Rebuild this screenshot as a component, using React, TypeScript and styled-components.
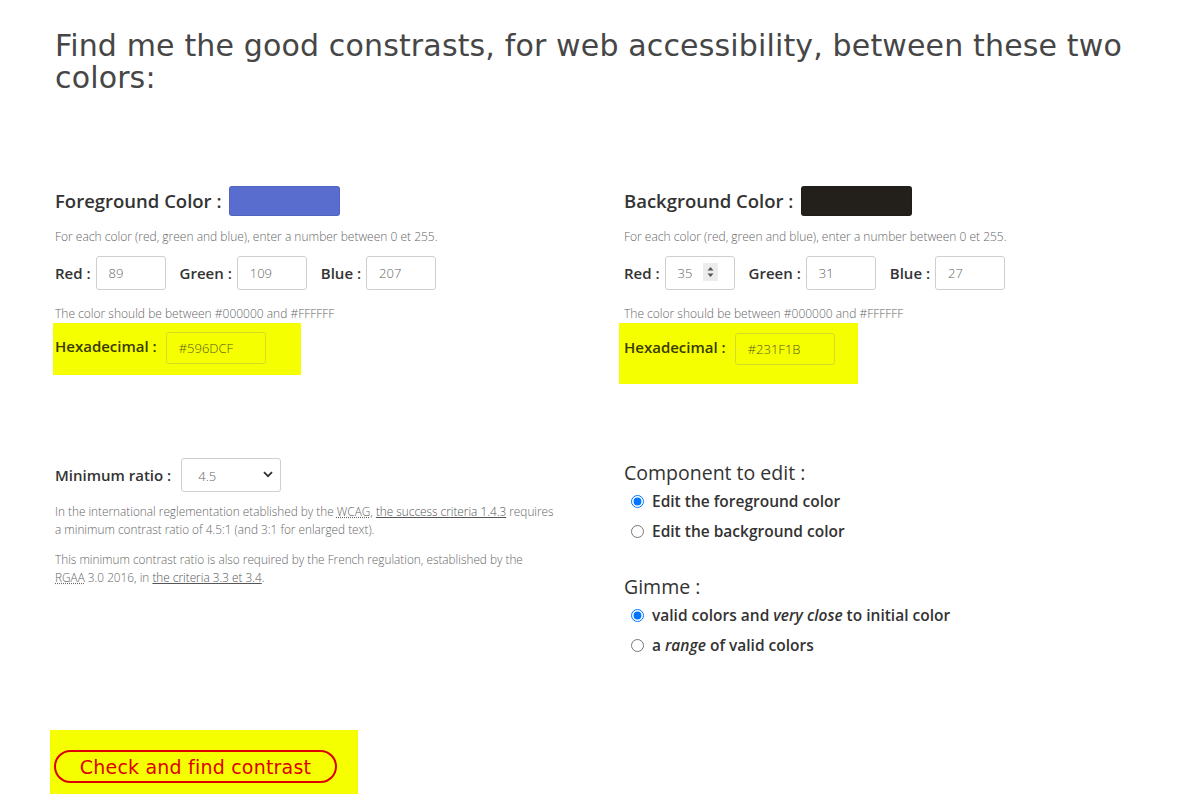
import React from 'react';
import styled, { createGlobalStyle } from 'styled-components';

const GlobalStyle = createGlobalStyle`
  html, body {
    margin: 0;
    padding: 0;
    background: #fff;
  }
  body {
    font-family: 'Open Sans', 'Liberation Sans', sans-serif;
    color: #333;
  }
`;

const Page = styled.main`
  padding: 30px 0 40px 55px;
  width: 1090px;
`;

const Title = styled.h1`
  margin: 0;
  font-family: 'DejaVu Sans', 'Liberation Sans', sans-serif;
  font-weight: 400;
  font-size: 30px;
  letter-spacing: 0.15px;
  line-height: 32px;
  color: #464646;
`;

const Grid = styled.div`
  display: grid;
  grid-template-columns: 569px 1fr;
  align-items: start;
  margin-top: ${(p: { $top: number }) => p.$top}px;
`;

const Column = styled.section<{ $pt?: number }>`
  padding-top: ${(p) => p.$pt || 0}px;
`;

const PanelHead = styled.div`
  display: flex;
  align-items: center;
  gap: 8px;
  height: 30px;
`;

const Heading = styled.h2<{ $weight?: number }>`
  margin: 0;
  font-size: ${(p) => (p.$weight === 400 ? 19.5 : 18.5)}px;
  line-height: 26px;
  font-weight: ${(p) => p.$weight || 600};
  color: #333;
`;

const Swatch = styled.span<{ $color: string }>`
  display: inline-block;
  width: 111px;
  height: 30px;
  border-radius: 3px;
  background: ${(p) => p.$color};
  box-shadow: inset 0 0 0 1px rgba(0, 0, 0, 0.08);
`;

const Help = styled.p<{ $mt: number }>`
  margin: ${(p) => p.$mt}px 0 0;
  font-size: 12px;
  line-height: 18px;
  font-weight: 300;
  color: #666;
`;

const RgbRow = styled.div`
  display: flex;
  align-items: center;
  margin-top: 10px;
`;

const Field = styled.label<{ $gap?: number }>`
  display: inline-flex;
  align-items: center;
  gap: ${(p) => p.$gap || 5}px;
  margin-right: 14px;
  font-size: 15px;
  font-weight: 600;
  color: #333;
`;

const InputWrap = styled.span`
  position: relative;
  display: inline-block;
`;

const TextInput = styled.input<{ $w: number; $h: number; $tint?: boolean }>`
  box-sizing: border-box;
  width: ${(p) => p.$w}px;
  height: ${(p) => p.$h}px;
  padding: 0 12px;
  border: 1px solid ${(p) => (p.$tint ? '#d4dc2a' : '#cfcfcf')};
  border-radius: 3px;
  background: transparent;
  font-family: 'Open Sans', 'Liberation Sans', sans-serif;
  font-size: 13px;
  font-weight: 300;
  color: ${(p) => (p.$tint ? '#5a5a1a' : '#666')};
  outline: none;
`;

const Spinner = styled.span`
  position: absolute;
  left: 38px;
  top: 7px;
  width: 15px;
  height: 18px;
  background: #ececec;
  display: flex;
  align-items: center;
  justify-content: center;
`;

const Highlight = styled.div<{ $pad: string; $ml: number }>`
  display: inline-flex;
  align-items: flex-start;
  gap: 9px;
  margin-left: ${(p) => p.$ml}px;
  padding: ${(p) => p.$pad};
  background: #f5ff00;
  font-size: 15px;
  font-weight: 600;
  color: #3a3a00;
`;

const HexLabel = styled.span`
  line-height: 28px;
`;

const SelectWrap = styled.span`
  position: relative;
  display: inline-block;
`;

const Select = styled.select`
  appearance: none;
  box-sizing: border-box;
  width: 100px;
  height: 34px;
  padding: 2px 0 0 16px;
  border: 1px solid #cfcfcf;
  border-radius: 3px;
  background: #fff;
  font-family: 'Open Sans', 'Liberation Sans', sans-serif;
  font-size: 13px;
  font-weight: 300;
  color: #666;
`;

const Chevron = styled.svg`
  position: absolute;
  right: 8px;
  top: 13px;
  pointer-events: none;
`;

const Para = styled.p<{ $mt: number }>`
  margin: ${(p) => p.$mt}px 0 0;
  width: 500px;
  font-size: 11.8px;
  line-height: 18px;
  font-weight: 300;
  color: #666;
`;

const Link = styled.a`
  color: #555;
  text-decoration: underline;
`;

const Abbr = styled.abbr`
  text-decoration: underline dotted;
`;

const RadioList = styled.div<{ $mt?: number }>`
  margin-top: ${(p) => p.$mt || 0}px;
`;

const RadioRow = styled.label`
  display: flex;
  align-items: center;
  height: 30px;
  padding-left: 6px;
  font-size: 15.5px;
  font-weight: 600;
  color: #333;

  input {
    margin: 0 8px 0 1px;
  }
`;

const ButtonArea = styled.div`
  display: inline-block;
  margin: 70px 0 0 -5px;
  padding: 20px 21px 11px 4px;
  background: #f5ff00;
`;

const CheckButton = styled.button`
  box-sizing: border-box;
  width: 283px;
  height: 33px;
  border: 2px solid #dd0000;
  border-radius: 17px;
  background: transparent;
  font-family: 'DejaVu Sans', 'Liberation Sans', sans-serif;
  font-size: 19px;
  letter-spacing: 0.2px;
  color: #dd0000;
  padding: 0;
`;

type ColorPanelProps = {
  title: string;
  swatch: string;
  rgb: [number, number, number];
  hex: string;
  spinner?: boolean;
  pad: string;
  ml: number;
};

const ColorPanel = ({ title, swatch, rgb, hex, spinner, pad, ml }: ColorPanelProps) => (
  <Column>
    <PanelHead>
      <Heading>{title} :</Heading>
      <Swatch $color={swatch} />
    </PanelHead>
    <Help $mt={12}>For each color (red, green and blue), enter a number between 0 et 255.</Help>
    <RgbRow>
      {(['Red', 'Green', 'Blue'] as const).map((name, i) => (
        <Field key={name}>
          {name} :
          <InputWrap>
            <TextInput $w={70} $h={34} defaultValue={rgb[i]} />
            {spinner && i === 0 && (
              <Spinner>
                <svg width="7" height="12" viewBox="0 0 7 12">
                  <path d="M3.5 1 L6.5 4.5 H0.5 Z M3.5 11 L6.5 7.5 H0.5 Z" fill="#555" />
                </svg>
              </Spinner>
            )}
          </InputWrap>
        </Field>
      ))}
    </RgbRow>
    <Help $mt={15}>The color should be between #000000 and #FFFFFF</Help>
    <Highlight $pad={pad} $ml={ml}>
      <HexLabel>Hexadecimal :</HexLabel>
      <TextInput $w={100} $h={32} $tint defaultValue={hex} />
    </Highlight>
  </Column>
);

const App = () => (
  <>
    <GlobalStyle />
    <Page>
      <Title>Find me the good constrasts, for web accessibility, between these two colors:</Title>

      <Grid $top={92}>
        <ColorPanel
          title="Foreground Color"
          swatch="#596dcf"
          rgb={[89, 109, 207]}
          hex="#596DCF"
          pad="9px 35px 11px 2px"
          ml={-2}
        />
        <ColorPanel
          title="Background Color"
          swatch="#231f1b"
          rgb={[35, 31, 27]}
          hex="#231F1B"
          spinner
          pad="10px 23px 19px 5px"
          ml={-5}
        />
      </Grid>

      <Grid $top={74}>
        <Column>
          <Field $gap={10}>
            Minimum ratio :
            <SelectWrap>
              <Select defaultValue="4.5">
                <option>3</option>
                <option>4.5</option>
                <option>7</option>
              </Select>
              <Chevron width="10" height="7" viewBox="0 0 10 7">
                <path d="M1 1.2 L5 5.2 L9 1.2" fill="none" stroke="#333" strokeWidth="1.8" />
              </Chevron>
            </SelectWrap>
          </Field>
          <Para $mt={10}>
            In the international reglementation etablished by the <Abbr title="Web Content Accessibility Guidelines">WCAG</Abbr>,{' '}
            <Link href="#">the success criteria 1.4.3</Link> requires a minimum contrast ratio of 4.5:1 (and 3:1 for enlarged text).
          </Para>
          <Para $mt={12}>
            This minimum contrast ratio is also required by the French regulation, established by the{' '}
            <Abbr title="Référentiel général d'accessibilité pour les administrations">RGAA</Abbr> 3.0 2016, in{' '}
            <Link href="#">the criteria 3.3 et 3.4</Link>.
          </Para>
        </Column>
        <Column $pt={2}>
          <Heading $weight={400}>Component to edit :</Heading>
          <RadioList>
            <RadioRow>
              <input type="radio" name="edit" defaultChecked /> Edit the foreground color
            </RadioRow>
            <RadioRow>
              <input type="radio" name="edit" /> Edit the background color
            </RadioRow>
          </RadioList>
          <RadioList $mt={28}>
            <Heading $weight={400}>Gimme :</Heading>
            <RadioRow>
              <input type="radio" name="gimme" defaultChecked /> valid colors and&nbsp;<em>very close</em>&nbsp;to initial color
            </RadioRow>
            <RadioRow>
              <input type="radio" name="gimme" /> a&nbsp;<em>range</em>&nbsp;of valid colors
            </RadioRow>
          </RadioList>
        </Column>
      </Grid>

      <ButtonArea>
        <CheckButton type="button">Check and find contrast</CheckButton>
      </ButtonArea>
    </Page>
  </>
);

export default App;
